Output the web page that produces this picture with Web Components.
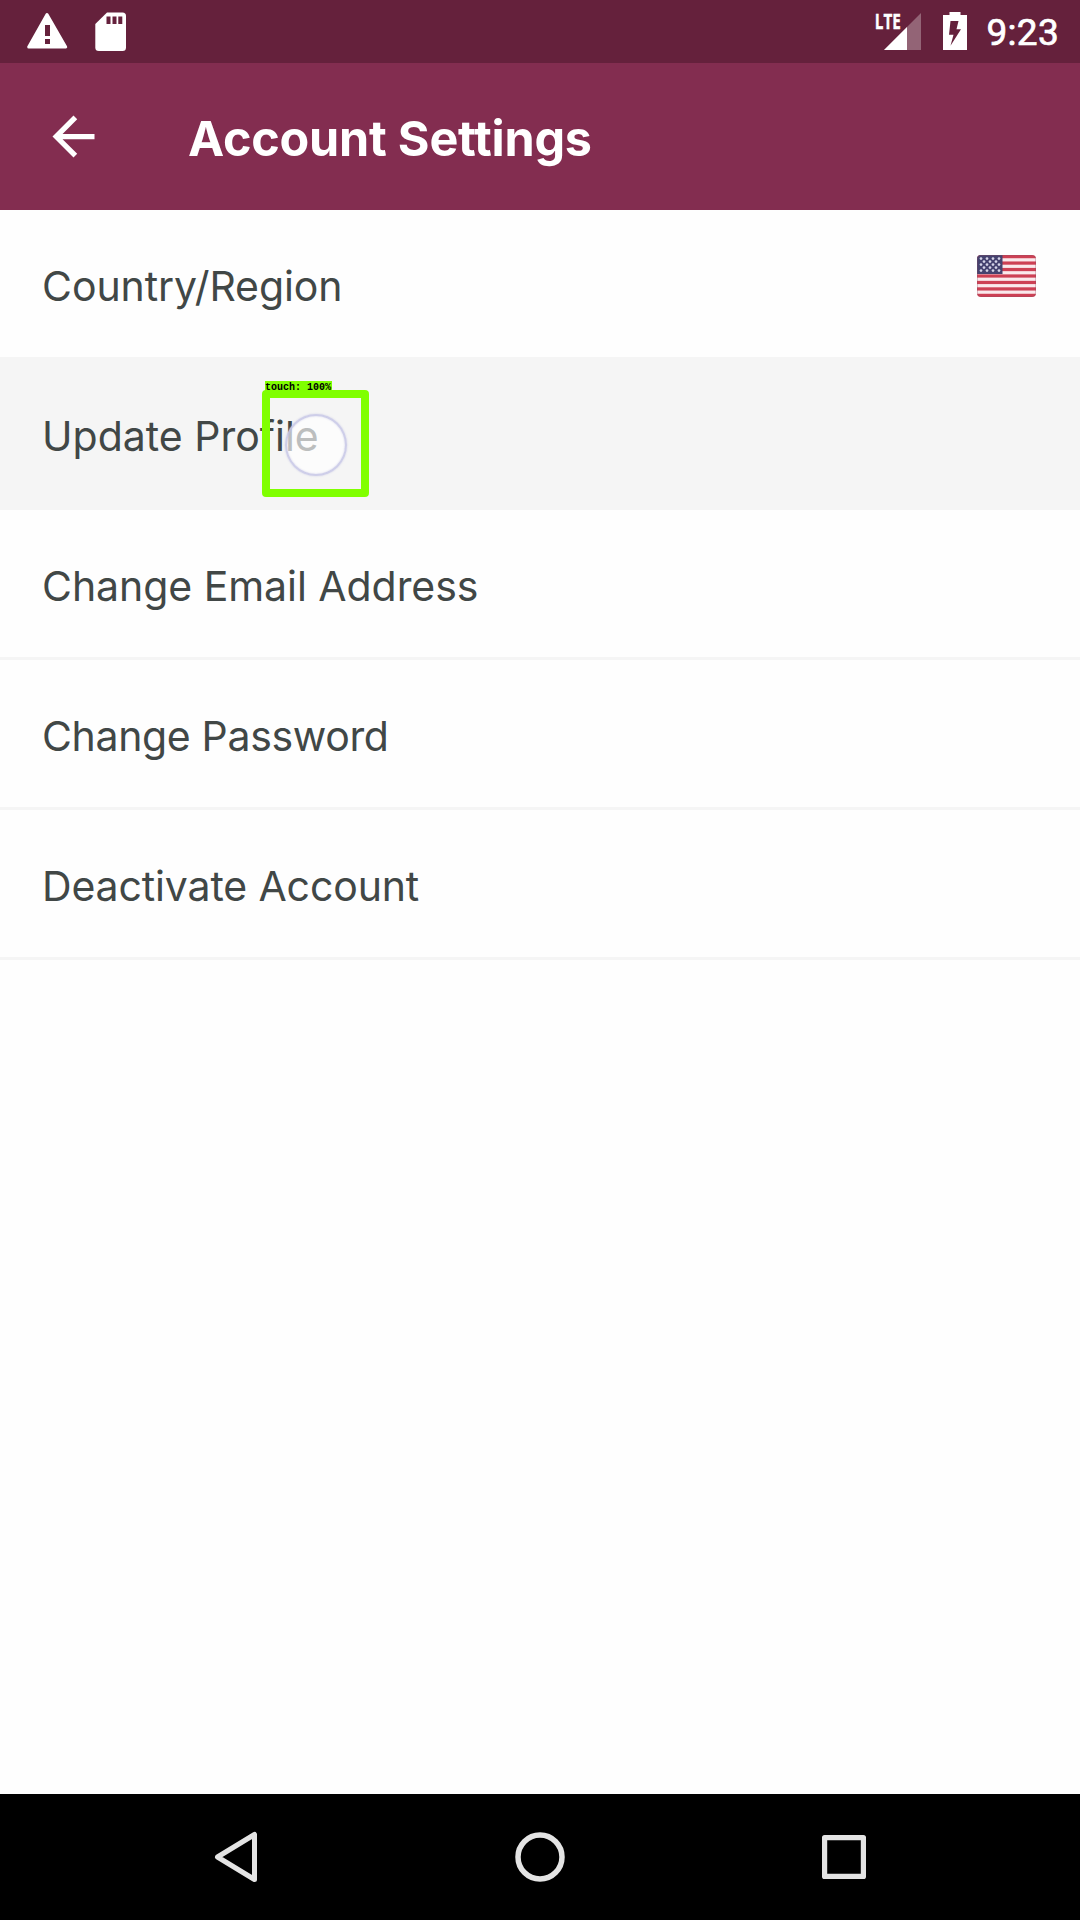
<!DOCTYPE html>
<html lang="en">
<head>
<meta charset="utf-8">
<title>Account Settings</title>
<style>
html,body{margin:0;padding:0;background:#fefefe}
body{width:1080px;height:1920px;overflow:hidden;font-family:Inter,"Open Sans",sans-serif}
</style>
</head>
<body>
<settings-screen></settings-screen>
<script>
const define = (name, html, setup) => {
  const template = document.createElement('template');
  template.innerHTML = html;
  customElements.define(name, class extends HTMLElement {
    constructor() {
      super();
      this.attachShadow({mode: 'open'}).append(template.content.cloneNode(true));
    }
    connectedCallback() { if (setup) setup(this); }
  });
};

/* Tracks its text so that the ink spans the given width. */
define('fit-text', `<style>:host{display:block;white-space:nowrap;font-variant-ligatures:none}</style><slot></slot>`, el => {
  const text = el.textContent, cs = getComputedStyle(el);
  const ctx = document.createElement('canvas').getContext('2d');
  ctx.font = `${cs.fontWeight} ${cs.fontSize} ${cs.fontFamily}`;
  ctx.letterSpacing = '0.01px';
  const m = ctx.measureText(text);
  const ink = m.actualBoundingBoxLeft + m.actualBoundingBoxRight;
  el.style.letterSpacing = ((+el.getAttribute('ink') - ink) / (text.length - 1)).toFixed(3) + 'px';
  el.style.marginLeft = m.actualBoundingBoxLeft + (+el.getAttribute('inset') || 0) + 'px';
});

define('status-bar', `<style>
:host{display:flex;height:63px;background:#65213c;box-sizing:border-box;justify-content:space-between;color:#fff;font-family:Roboto,sans-serif}
.side{display:flex}
svg{display:block}
.time{font-size:37px;font-weight:400;-webkit-text-stroke:.7px #fff;line-height:65px;padding-left:19.500px;width:112px;box-sizing:border-box}
</style>
<div class="side"><svg width="140" height="63" fill="#fff">
<path d="M47 14.5L65.7 47H28.7Z" stroke="#fff" stroke-width="3" stroke-linejoin="round"/>
<path d="M45 25h5v11h-5zM45 39h5v5h-5z" fill="#65213c"/>
<path d="M107 12.5h15.5q3.5 0 3.5 3.5v31.500q0 3.500-3.500 3.500h-23.700q-3.500 0-3.500-3.500v-23.500z"/>
<path d="M106.500 16.500h4v7.500h-4zM112.500 16.500h4v7.500h-4zM118.300 16.500h4v7.500h-4z" fill="#65213c"/>
</svg></div>
<div class="side"><svg width="107" height="63" viewBox="861 0 107 63" fill="#fff">
<path d="M921 13v37H884z" opacity=".3"/>
<path d="M907 27v23H884z"/>
<path d="M875 10h26v16l-6 6h-20z" fill="#65213c"/>
<text x="874.800" y="29.200" font-family="Open Sans,sans-serif" font-weight="700" font-size="22" textLength="26" lengthAdjust="spacingAndGlyphs" stroke="#fff" stroke-width=".4">LTE</text>
<path d="M949.500 12h11v3h6.500v35h-24V15h6.500z"/>
<path d="M950.500 21h8l-2 8.300h4.500l-10.500 16.500 3-11h-4.500z" fill="#65213c"/>
</svg><div class="time"><fit-text ink="69.500">9:23</fit-text></div></div>`);

define('app-toolbar', `<style>
:host{display:flex;align-items:center;height:147px;background:#832d50;color:#fff;padding-left:42px;box-sizing:border-box}
svg{margin-right:84px}
fit-text{font-size:48.5px;font-weight:700;padding-top:3px}
</style>
<svg width="63" height="63" viewBox="0 0 24 24" fill="#fff"><path d="M20 11H7.830l5.590-5.590L12 4l-8 8 8 8 1.410-1.410L7.830 13H20z"/></svg>
<fit-text ink="402">Account Settings</fit-text>`);

define('settings-row', `<style>
:host{display:flex;align-items:center;justify-content:space-between;height:150px;box-sizing:border-box;border-bottom:3px solid #f5f5f5;padding:0 44px;font-size:41px;color:#414746;position:relative}
:host([pressed]){background:#f5f5f5}
::slotted(fit-text){padding-top:4px}
</style><slot></slot><slot name="end"></slot>`);

define('us-flag', `<style>:host{display:block;height:42px;margin:0 .5px 16px 0}svg{display:block}</style>
<svg width="59" height="42" viewBox="0 0 59 42"></svg>`, el => {
  const h = 42 / 13;
  let s = '<clipPath id="c"><rect width="59" height="42" rx="4"/></clipPath><g clip-path="url(#c)"><rect width="59" height="42" fill="#fae9ec"/>';
  for (let i = 0; i < 13; i += 2) s += `<rect y="${i * h}" width="59" height="${h}" fill="#cd4054"/>`;
  s += '<rect width="25.500" height="19" fill="#45426f"/>';
  for (let r = 0; r < 5; r++) for (let c = 0; c < (r % 2 ? 3 : 4); c++)
    s += `<circle cx="${4 + (r % 2) * 3 + c * 6}" cy="${3.6 + r * 3}" r="1.350" fill="#d5d4e8"/>`;
  s += '</g><rect x=".5" y=".5" width="58" height="41" rx="3.500" fill="none" stroke="#8b5063" stroke-opacity=".3"/>';
  el.shadowRoot.querySelector('svg').innerHTML = s;
});

define('touch-marker', `<style>
:host{display:block;position:absolute;left:262px;top:21px;width:107px;height:116px}
.box{position:absolute;left:0;top:9px;width:106.500px;height:106.500px;box-sizing:border-box;border:8px solid #80ff00;border-radius:4px}
.dot{position:absolute;left:23px;top:33px;width:62px;height:62px;box-sizing:border-box;border-radius:50%;background:rgba(255,255,255,.65);border:2.500px solid rgba(190,190,225,.75);box-shadow:0 0 2px rgba(190,190,225,.7),inset 0 0 2px rgba(190,190,225,.7)}
.label{position:absolute;left:3px;top:0;width:67px;height:12px;background:#80ff00;color:#000;font:bold 10px/14px "Liberation Mono",monospace;white-space:pre}
</style><div class="dot"></div><div class="box"></div><div class="label">touch: 100%</div>`);

define('nav-bar', `<style>
:host{display:flex;height:126px;background:#000;justify-content:space-between;align-items:center;padding:0 210px;box-sizing:border-box}
svg{display:block}
</style>
<svg width="52" height="60" viewBox="0 0 52 60" fill="none" stroke="#e4e4e4" stroke-width="5" stroke-linejoin="round"><path d="M44.500 7.500v45L7.500 30z"/></svg>
<svg width="60" height="60" viewBox="0 0 60 60" fill="none" stroke="#e4e4e4" stroke-width="5.500"><circle cx="30" cy="30" r="22"/></svg>
<svg width="52" height="60" viewBox="0 0 52 60" fill="none" stroke="#e4e4e4" stroke-width="5.200" stroke-linejoin="round"><rect x="6.600" y="10.600" width="38.800" height="38.800"/></svg>`);

define('settings-screen', `<style>
:host{display:flex;flex-direction:column;width:1080px;height:1920px;background:#fefefe}
main{flex:1}
</style>
<status-bar></status-bar>
<app-toolbar></app-toolbar>
<main>
<settings-row><fit-text ink="296.500">Country/Region</fit-text><us-flag slot="end"></us-flag></settings-row>
<settings-row pressed><fit-text ink="272" inset="1">Update Profile</fit-text><touch-marker slot="end"></touch-marker></settings-row>
<settings-row><fit-text ink="433">Change Email Address</fit-text></settings-row>
<settings-row><fit-text ink="342">Change Password</fit-text></settings-row>
<settings-row><fit-text ink="374" inset="1">Deactivate Account</fit-text></settings-row>
</main>
<nav-bar></nav-bar>`);
</script>
</body>
</html>
